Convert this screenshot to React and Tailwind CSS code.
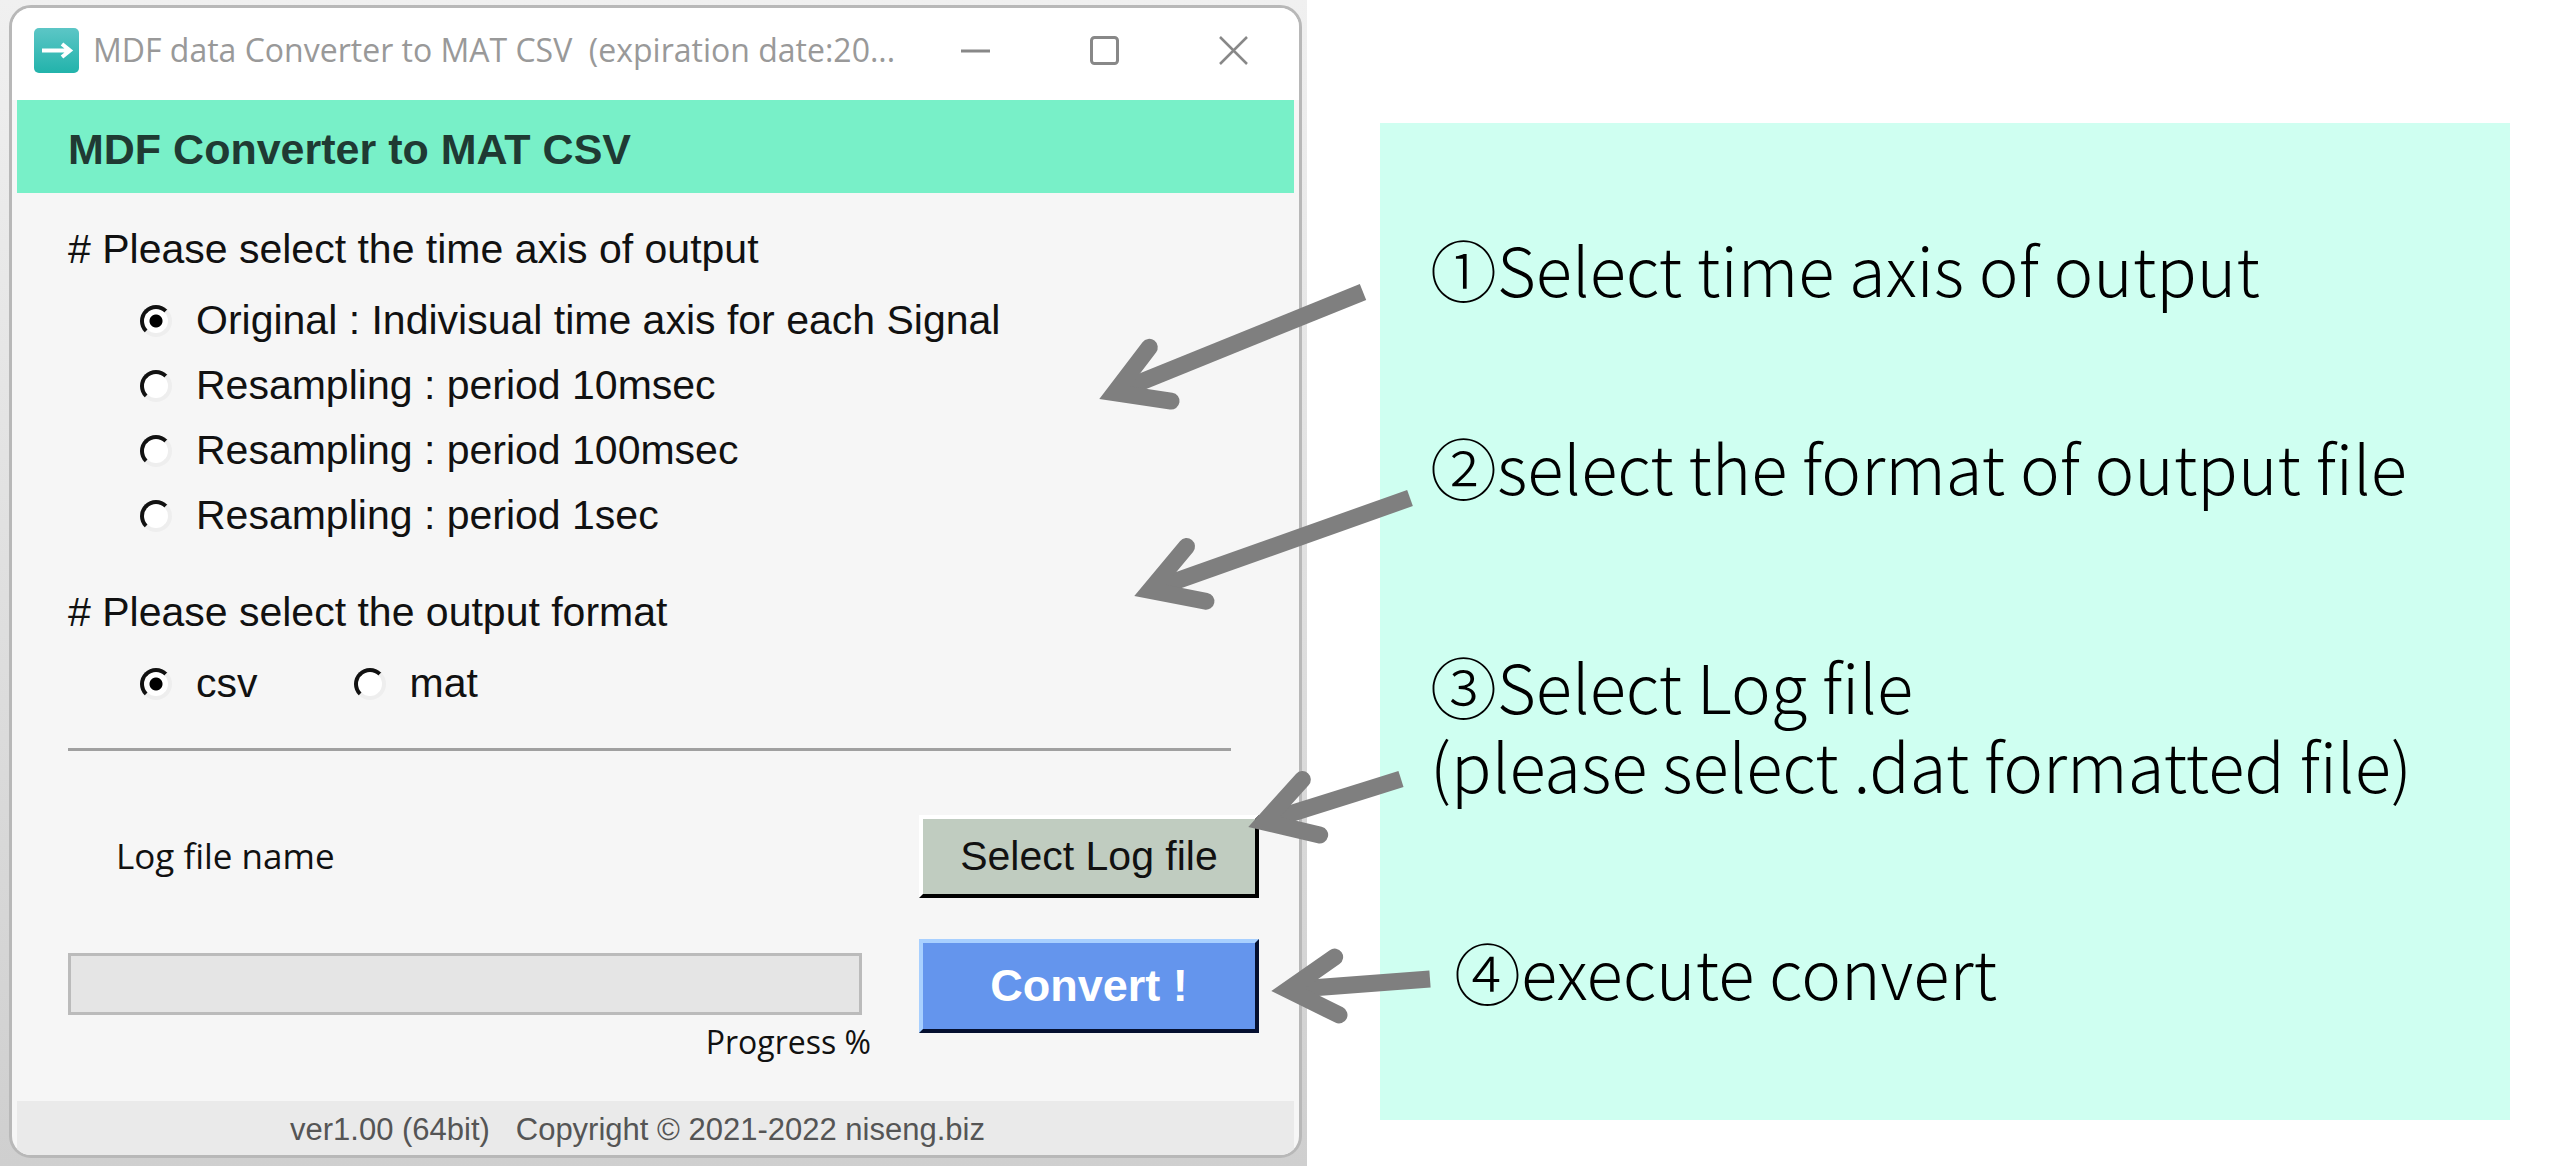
import { useState } from "react";

const TIME_AXES = [
  { value: "original", label: "Original : Indivisual time axis for each Signal" },
  { value: "10msec", label: "Resampling : period 10msec" },
  { value: "100msec", label: "Resampling : period 100msec" },
  { value: "1sec", label: "Resampling : period 1sec" },
];

const FORMATS = ["csv", "mat"];

const ARROWS = [
  { tip: [1099, 399], tail: [1363, 292] },
  { tip: [1134, 596], tail: [1410, 498] },
  { tip: [1248, 827], tail: [1401, 779] },
  { tip: [1271, 991], tail: [1430, 979] },
];

function Radio({ name, value, label, checked, onChange }) {
  return (
    <label className="flex items-center gap-6 leading-[65px]">
      <input
        type="radio"
        name={name}
        value={value}
        checked={checked}
        onChange={() => onChange(value)}
        className="appearance-none w-8 h-8 rounded-full bg-white border-4 border-t-[#111] border-l-[#111] border-r-[#eee] border-b-[#eee] checked:bg-[radial-gradient(circle,#000_6px,#fff_7px)]"
      />
      {label}
    </label>
  );
}

function TitleBar() {
  return (
    <header className="flex items-center h-[92px] pb-2 pl-[22px] pr-[51px] bg-white">
      <svg viewBox="0 0 45 45" className="w-[45px] h-[45px] shrink-0">
        <defs>
          <linearGradient id="logo" x1="0" y1="0" x2="0" y2="1">
            <stop offset="0" stopColor="#5cc6c6" />
            <stop offset="1" stopColor="#22b3ab" />
          </linearGradient>
        </defs>
        <rect width="45" height="45" rx="5" fill="url(#logo)" />
        <path d="M8 22.5H35M28 16l8 6.5-8 6.5" fill="none" stroke="#fff" strokeWidth="4" />
      </svg>
      <p className="ml-[14px] grow truncate font-['Open_Sans',sans-serif] text-[32px] text-[#999]">
        MDF data Converter to MAT CSV&nbsp; (expiration date:20...
      </p>
      <div className="flex gap-[100px] text-[#888]">
        <button aria-label="Minimize">
          <svg viewBox="0 0 29 29" className="w-[29px] h-[29px]" fill="none" stroke="currentColor" strokeWidth="3">
            <path d="M0 15H29" />
          </svg>
        </button>
        <button aria-label="Maximize">
          <svg viewBox="0 0 29 29" className="w-[29px] h-[29px]" fill="none" stroke="currentColor" strokeWidth="3">
            <rect x="1.5" y="1.5" width="26" height="26" rx="3" />
          </svg>
        </button>
        <button aria-label="Close">
          <svg viewBox="0 0 29 29" className="w-[29px] h-[29px]" fill="none" stroke="currentColor" strokeWidth="2.5">
            <path d="M1 1L28 28M28 1L1 28" />
          </svg>
        </button>
      </div>
    </header>
  );
}

function ConverterWindow() {
  const [axis, setAxis] = useState("original");
  const [format, setFormat] = useState("csv");

  return (
    <section className="flex flex-col grow rounded-[22px] border-[3px] border-[#b8b8b8] bg-[#f6f6f6] overflow-hidden text-[41px] text-[#111]">
      <TitleBar />
      <div className="flex flex-col grow px-[5px]">
        <h1 className="h-[93px] pl-[51px] text-[43px] leading-[99px] font-bold bg-[#78f0c8] text-[#1f3a33]">
          MDF Converter to MAT CSV
        </h1>

        <div className="grow pt-6 pl-[51px] pr-[35px]">
          <fieldset>
            <legend className="leading-[65px]"># Please select the time axis of output</legend>
            <div className="pt-[6px] pl-[72px]">
              {TIME_AXES.map((a) => (
                <Radio key={a.value} name="axis" value={a.value} label={a.label} checked={axis === a.value} onChange={setAxis} />
              ))}
            </div>
          </fieldset>

          <fieldset className="mt-8">
            <legend className="leading-[65px]"># Please select the output format</legend>
            <div className="flex gap-24 pt-[6px] pl-[72px]">
              {FORMATS.map((f) => (
                <Radio key={f} name="format" value={f} label={f} checked={format === f} onChange={setFormat} />
              ))}
            </div>
          </fieldset>

          <hr className="mt-8 mr-7 border-t-[3px] border-[#a0a0a0]" />

          <div className="grid grid-cols-[1fr_340px] gap-x-12 gap-y-[41px] mt-16">
            <p className="self-center pl-12 font-['Open_Sans',sans-serif] text-[35px]">Log file name</p>
            <button className="h-[83px] border-4 border-t-white border-l-white border-r-black border-b-black bg-[#c0ccc0]">
              Select Log file
            </button>
            <div className="pt-[14px] font-['Open_Sans',sans-serif] text-[32px] leading-[54px]">
              <div role="progressbar" aria-label="Progress" aria-valuenow={0} className="h-[62px] mr-[9px] border-[3px] border-[#bbb] bg-[#e5e5e5]" />
              <p className="text-right">Progress %</p>
            </div>
            <button className="h-[94px] border-4 border-t-[#a8d0ff] border-l-[#a8d0ff] border-r-[#051030] border-b-[#051030] bg-[#6495ed] text-[45px] font-bold text-white">
              Convert !
            </button>
          </div>
        </div>

        <footer className="h-[54px] pr-9 text-center text-[31px] leading-[58px] bg-[#eaeaea] text-[#555]">
          ver1.00 (64bit)&nbsp;&nbsp; Copyright © 2021-2022 niseng.biz
        </footer>
      </div>
    </section>
  );
}

function Arrow({ tip, tail }) {
  const dx = tail[0] - tip[0];
  const dy = tail[1] - tip[1];
  const angle = (Math.atan2(dy, dx) * 180) / Math.PI;
  return (
    <g transform={`translate(${tip[0]} ${tip[1]}) rotate(${angle})`} fill="none" stroke="#7f7f7f" strokeWidth="17">
      <path d={`M17 0H${Math.hypot(dx, dy)}`} />
      <path d="M66 -29L17 0L66 29" strokeLinecap="round" />
    </g>
  );
}

export default function App() {
  return (
    <main className="relative grid grid-cols-[1307fr_1253fr] min-h-screen bg-white font-['Liberation_Sans',Arial,sans-serif]">
      <div className="flex pt-[5px] pr-[5px] pb-2 pl-[9px] bg-linear-to-b from-[#f0f0f0] to-[#cfcfcf]">
        <ConverterWindow />
      </div>

      <div className="flex pt-[123px] pr-[50px] pb-[46px] pl-[73px]">
        <ol className="grow pt-[105px] pl-[50px] bg-[#cffff1] font-['Noto_Sans_CJK_JP',sans-serif] font-light text-[67px] leading-[79px] text-black">
          <li>①Select time axis of output</li>
          <li className="mt-[119px]">②select the format of output file</li>
          <li className="mt-[140px]">
            ③Select Log file
            <br />
            (please select .dat formatted file)
          </li>
          <li className="mt-[128px] pl-6">④execute convert</li>
        </ol>
      </div>

      <svg viewBox="0 0 2560 1166" className="absolute inset-0 w-full h-full pointer-events-none">
        {ARROWS.map((a) => (
          <Arrow key={a.tip[0]} tip={a.tip} tail={a.tail} />
        ))}
      </svg>
    </main>
  );
}
